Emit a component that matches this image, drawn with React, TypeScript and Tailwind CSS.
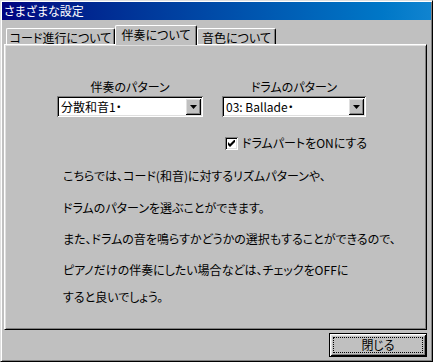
const raised = "shadow-[inset_1px_1px_#fff,inset_-1px_-1px_#000,inset_2px_2px_#dfdfdf,inset_-2px_-2px_#808080]";
const sunken = "shadow-[inset_1px_1px_#808080,inset_-1px_-1px_#fff,inset_2px_2px_#000,inset_-2px_-2px_#dfdfdf]";

function Tab({ label, width, active }: { label: string; width: number; active?: boolean }) {
  if (active) {
    return (
      <div
        className="relative z-10 -mb-[1px] h-[20px] flex justify-center pt-[2px] bg-[#c0c0c0] border-t border-l border-white border-r border-r-black rounded-t-[2px] shadow-[inset_-1px_0_#808080]"
        style={{ width }}
      >
        <span className="leading-[14px]">{label}</span>
      </div>
    );
  }
  return (
    <div
      className="h-[16px] flex justify-center pt-[2px] border-t border-l border-white border-r border-r-black rounded-t-[2px] shadow-[inset_-1px_0_#808080]"
      style={{ width }}
    >
      <span className="leading-[14px]">{label}</span>
    </div>
  );
}

function Combo({ value, width }: { value: string; width: number }) {
  return (
    <div className={`h-[21px] bg-white flex items-center pl-[4px] pr-[2px] ${sunken}`} style={{ width }}>
      <span className="flex-1 leading-[14px]">{value}</span>
      <div className={`w-[16px] h-[17px] bg-[#c0c0c0] flex items-center justify-center ${raised}`}>
        <svg width="7" height="4" viewBox="0 0 7 4">
          <path d="M0 0h7L3.5 4z" fill="#000" />
        </svg>
      </div>
    </div>
  );
}

export default function App() {
  const lines = [
    "こちらでは、コード(和音)に対するリズムパターンや、",
    "ドラムのパターンを選ぶことができます。",
    "また、ドラムの音を鳴らすかどうかの選択もすることができるので、",
    "ピアノだけの伴奏にしたい場合などは、チェックをOFFに",
    "すると良いでしょう。",
  ];
  const gaps = ["mt-0", "mt-[18px]", "mt-[17px]", "mt-[17px]", "mt-[13px]"];

  return (
    <div className="w-[433px] h-[362px] bg-[#c0c0c0] border border-t-[#dfdfdf] border-l-[#dfdfdf] border-r-black border-b-black shadow-[inset_1px_1px_#fff,inset_-1px_-1px_#808080] p-[1px] flex flex-col text-[12px] text-black font-['Noto_Sans_CJK_JP',sans-serif] [font-feature-settings:'palt'] select-none">
      {/* title bar */}
      <div className="h-[18px] shrink-0 bg-linear-to-r from-[#000080] to-[#1084d0] flex items-center pl-[2px] text-white">
        さまざまな設定
      </div>

      {/* tabs */}
      <div className="mt-[5px] h-[19px] flex items-end pl-[4px]">
        <Tab label="コード進行について" width={109} />
        <Tab label="伴奏について" width={82} active />
        <Tab label="音色について" width={79} />
      </div>

      {/* page */}
      <div className="ml-[2px] w-[423px] h-[286px] shrink-0 border border-t-white border-l-white border-r-black border-b-black shadow-[inset_1px_1px_#dfdfdf,inset_-1px_-1px_#808080] p-[1px]">
        <div className="pt-[34px] pl-[51px] flex gap-[19px]">
          <div className="flex flex-col items-center">
            <div className="h-[14px] leading-[14px]">伴奏のパターン</div>
            <div className="mt-[2px]">
              <Combo value="分散和音1・" width={146} />
            </div>
          </div>
          <div className="flex flex-col items-center">
            <div className="h-[14px] leading-[14px]">ドラムのパターン</div>
            <div className="mt-[2px]">
              <Combo value="03: Ballade・" width={144} />
            </div>
          </div>
        </div>

        <div className="mt-[19px] ml-[219px] flex items-center gap-[4px]">
          <div className={`w-[13px] h-[13px] bg-white flex items-center justify-center ${sunken}`}>
            <svg width="7" height="7" viewBox="0 0 7 7">
              <path d="M0 2v3l2 2 5-5V-1L2 4z" fill="#000" />
            </svg>
          </div>
          <span className="leading-[14px]">ドラムパートをONにする</span>
        </div>

        <div className="mt-[19px] pl-[57px]">
          {lines.map((l, i) => (
            <div key={i} className={`h-[14px] leading-[14px] ${gaps[i]}`}>
              {l}
            </div>
          ))}
        </div>
      </div>

      {/* footer */}
      <div className="mt-[3px] flex justify-end pr-[4px]">
        <div className={`w-[98px] h-[24px] border border-black p-[3px] ${raised}`}>
          <div className="h-full border border-dotted border-black flex items-center justify-center leading-[14px]">
            閉じる
          </div>
        </div>
      </div>
    </div>
  );
}
